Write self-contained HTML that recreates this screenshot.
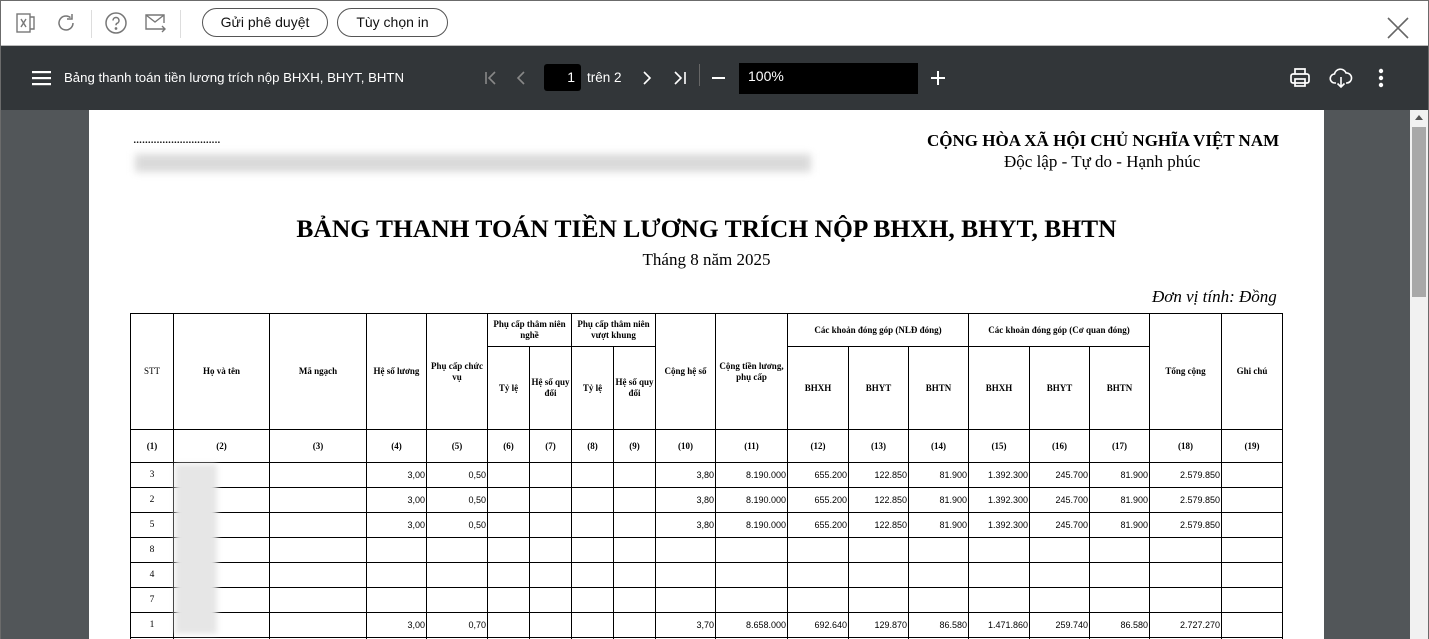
<!DOCTYPE html>
<html><head><meta charset="utf-8"><style>
*{box-sizing:border-box;margin:0;padding:0}
html,body{width:1429px;height:639px;overflow:hidden}
body{font-family:"Liberation Sans",sans-serif;background:#fff;position:relative}
.frame{position:absolute;inset:0;border:1px solid #6b6b6b;border-bottom:none;pointer-events:none;z-index:10}
.top{position:absolute;left:0;top:0;width:1429px;height:46px;background:#fff;border-bottom:1px solid #bbb}
.btn{position:absolute;top:8px;height:29px;border:1px solid #555;border-radius:15px;font-size:14px;line-height:27px;text-align:center;color:#111}
.sep{position:absolute;top:10px;width:1px;height:28px;background:#ddd}
.bar{position:absolute;left:1px;top:46px;width:1427px;height:64px;background:#323639;color:#fff}
.gray{position:absolute;left:1px;top:110px;width:1409px;height:529px;background:#525659}
.sb{position:absolute;left:1410px;top:110px;width:18px;height:529px;background:#f1f1f1}
.page{position:absolute;left:89px;top:110px;width:1235px;height:529px;background:#fff;font-family:"Liberation Serif",serif;color:#000;overflow:hidden}
table{position:absolute;left:41px;top:203px;border-collapse:collapse;table-layout:fixed;font-family:"Liberation Serif",serif}
td{border:1px solid #000;font-size:9px;font-weight:bold;text-align:center;padding:0 1px;line-height:11px}
tr.d td{font-weight:normal;height:25px;font-size:9.5px}
tr.d td.n{text-align:right;font-family:"Liberation Sans",sans-serif;font-size:9px}
.blur{position:absolute;background:#d8d8d8;filter:blur(3px)}
</style></head><body>
<div class="top">
 <svg style="position:absolute;left:15px;top:12px" width="22" height="22" viewBox="0 0 22 22" fill="none" stroke="#777" stroke-width="1.4"><rect x="2" y="2" width="13" height="18"/><path d="M15 5h4v12h-4"/><path d="M6 7l5 8M11 7l-5 8"/></svg>
 <svg style="position:absolute;left:55px;top:12px" width="22" height="22" viewBox="0 0 22 22" fill="none" stroke="#777" stroke-width="1.5"><path d="M18 11a7 7 0 1 1-2.5-5.4"/><path d="M17 2v5h-5"/></svg>
 <div class="sep" style="left:91px"></div>
 <svg style="position:absolute;left:104px;top:11px" width="24" height="24" viewBox="0 0 24 24" fill="none" stroke="#777" stroke-width="1.5"><circle cx="12" cy="12" r="10"/><path d="M9 9.5a3 3 0 1 1 4 2.8c-.8.4-1 1-1 2"/><circle cx="12" cy="17.5" r=".6" fill="#777"/></svg>
 <svg style="position:absolute;left:144px;top:12px" width="24" height="22" viewBox="0 0 24 22" fill="none" stroke="#777" stroke-width="1.4"><path d="M14 17H2V3h18v8"/><path d="M2 3l9 7 9-7"/><path d="M14 17h7M18 14l3 3-3 3"/></svg>
 <div class="sep" style="left:180px"></div>
 <div class="btn" style="left:202px;width:126px">Gửi phê duyệt</div>
 <div class="btn" style="left:337px;width:111px">Tùy chọn in</div>
 <svg style="position:absolute;left:1387px;top:17px" width="22" height="22" viewBox="0 0 22 22" stroke="#666" stroke-width="1.6"><path d="M1 1l20 20M21 1L1 21"/></svg>
</div>
<div class="bar">
 <svg style="position:absolute;left:31px;top:25px" width="20" height="15"><rect y="0" width="19" height="2.2" fill="#fff"/><rect y="6" width="19" height="2.2" fill="#fff"/><rect y="12" width="19" height="2.2" fill="#fff"/></svg>
 <div style="position:absolute;left:63px;top:24px;font-size:13.2px">Bảng thanh toán tiền lương trích nộp BHXH, BHYT, BHTN</div>
 <svg style="position:absolute;left:483px;top:25px" width="14" height="14" fill="none" stroke="#888" stroke-width="1.6"><path d="M2 1v12M11 1L5 7l6 6"/></svg>
 <svg style="position:absolute;left:514px;top:25px" width="14" height="14" fill="none" stroke="#888" stroke-width="1.6"><path d="M9 1L3 7l6 6"/></svg>
 <div style="position:absolute;left:543px;top:18px;width:37px;height:27px;background:#000;border-radius:3px;text-align:right;padding-right:6px;font-size:14px;line-height:27px">1</div>
 <div style="position:absolute;left:586px;top:24px;font-size:13.5px">trên 2</div>
 <svg style="position:absolute;left:639px;top:25px" width="14" height="14" fill="none" stroke="#fff" stroke-width="1.6"><path d="M4 1l6 6-6 6"/></svg>
 <svg style="position:absolute;left:672px;top:25px" width="14" height="14" fill="none" stroke="#fff" stroke-width="1.6"><path d="M2 1l6 6-6 6M12 1v12"/></svg>
 <div style="position:absolute;left:698px;top:18px;width:1px;height:22px;background:#666"></div>
 <div style="position:absolute;left:711px;top:31px;width:13px;height:2px;background:#fff"></div>
 <div style="position:absolute;left:738px;top:17px;width:179px;height:31px;background:#000;font-size:14px;line-height:27px;padding-left:9px">100%</div>
 <div style="position:absolute;left:930px;top:31px;width:14px;height:2px;background:#fff"></div>
 <div style="position:absolute;left:936px;top:25px;width:2px;height:14px;background:#fff"></div>
 <svg style="position:absolute;left:1288px;top:21px" width="22" height="22" fill="none" stroke="#fff" stroke-width="1.7"><path d="M6 7V2h10v5"/><rect x="2" y="7" width="18" height="9" rx="2"/><rect x="6" y="12" width="10" height="7"/></svg>
 <svg style="position:absolute;left:1328px;top:21px" width="24" height="22" fill="none" stroke="#fff" stroke-width="1.6"><path d="M7 16H6a4.5 4.5 0 0 1-.5-9A6 6 0 0 1 17 6a4.5 4.5 0 0 1 1 10h-1"/><path d="M12 10v10M8.5 16.5L12 20l3.5-3.5"/></svg>
 <svg style="position:absolute;left:1376px;top:22px" width="8" height="20" fill="#fff"><circle cx="4" cy="3" r="2.2"/><circle cx="4" cy="10" r="2.2"/><circle cx="4" cy="17" r="2.2"/></svg>
</div>
<div class="gray"></div>
<div class="sb"><div style="position:absolute;left:5px;top:5px;border:4px solid transparent;border-bottom:5px solid #555;border-top:none"></div><div style="position:absolute;left:2px;top:17px;width:14px;height:170px;background:#a8a8a8"></div></div>
<div class="page">
 <div style="position:absolute;left:44px;top:22px;font-size:14px;letter-spacing:-0.6px">..............................</div>
 <div class="blur" style="left:46px;top:44px;width:676px;height:18px;background:#dadada;filter:blur(4px)"></div>
 <div style="position:absolute;left:838px;top:21px;font-size:17px;font-weight:bold;white-space:nowrap">CỘNG HÒA XÃ HỘI CHỦ NGHĨA VIỆT NAM</div>
 <div style="position:absolute;left:915px;top:42px;font-size:17px;white-space:nowrap">Độc lập - Tự do - Hạnh phúc</div>
 <div style="position:absolute;left:0;width:1235px;top:104px;text-align:center;font-size:25.5px;font-weight:bold">BẢNG THANH TOÁN TIỀN LƯƠNG TRÍCH NỘP BHXH, BHYT, BHTN</div>
 <div style="position:absolute;left:0;width:1235px;top:140px;text-align:center;font-size:17px">Tháng 8 năm 2025</div>
 <div style="position:absolute;left:1063px;top:177px;font-size:17px;font-style:italic">Đơn vị tính: Đồng</div>
 <table>
  <colgroup><col style="width:43px"><col style="width:96px"><col style="width:97px"><col style="width:60px"><col style="width:61px"><col style="width:42px"><col style="width:42px"><col style="width:42px"><col style="width:42px"><col style="width:60px"><col style="width:72px"><col style="width:61px"><col style="width:60px"><col style="width:60px"><col style="width:61px"><col style="width:60px"><col style="width:60px"><col style="width:72px"><col style="width:61px"></colgroup>
  <tr style="height:33px"><td rowspan="2" style="font-weight:normal">STT</td><td rowspan="2">Họ và tên</td><td rowspan="2">Mã ngạch</td><td rowspan="2">Hệ số lương</td><td rowspan="2">Phụ cấp chức vụ</td><td colspan="2">Phụ cấp thâm niên nghề</td><td colspan="2">Phụ cấp thâm niên vượt khung</td><td rowspan="2">Cộng hệ số</td><td rowspan="2">Cộng tiền lương, phụ cấp</td><td colspan="3">Các khoản đóng góp (NLĐ đóng)</td><td colspan="3">Các khoản đóng góp (Cơ quan đóng)</td><td rowspan="2">Tổng cộng</td><td rowspan="2">Ghi chú</td></tr>
  <tr style="height:83px"><td>Tỷ lệ</td><td>Hệ số quy đổi</td><td>Tỷ lệ</td><td>Hệ số quy đổi</td><td>BHXH</td><td>BHYT</td><td>BHTN</td><td>BHXH</td><td>BHYT</td><td>BHTN</td></tr>
  <tr style="height:33px"><td>(1)</td><td>(2)</td><td>(3)</td><td>(4)</td><td>(5)</td><td>(6)</td><td>(7)</td><td>(8)</td><td>(9)</td><td>(10)</td><td>(11)</td><td>(12)</td><td>(13)</td><td>(14)</td><td>(15)</td><td>(16)</td><td>(17)</td><td>(18)</td><td>(19)</td></tr>
  <tr class="d"><td>3</td><td></td><td></td><td class="n">3,00</td><td class="n">0,50</td><td></td><td></td><td></td><td></td><td class="n">3,80</td><td class="n">8.190.000</td><td class="n">655.200</td><td class="n">122.850</td><td class="n">81.900</td><td class="n">1.392.300</td><td class="n">245.700</td><td class="n">81.900</td><td class="n">2.579.850</td><td></td></tr>
  <tr class="d"><td>2</td><td></td><td></td><td class="n">3,00</td><td class="n">0,50</td><td></td><td></td><td></td><td></td><td class="n">3,80</td><td class="n">8.190.000</td><td class="n">655.200</td><td class="n">122.850</td><td class="n">81.900</td><td class="n">1.392.300</td><td class="n">245.700</td><td class="n">81.900</td><td class="n">2.579.850</td><td></td></tr>
  <tr class="d"><td>5</td><td></td><td></td><td class="n">3,00</td><td class="n">0,50</td><td></td><td></td><td></td><td></td><td class="n">3,80</td><td class="n">8.190.000</td><td class="n">655.200</td><td class="n">122.850</td><td class="n">81.900</td><td class="n">1.392.300</td><td class="n">245.700</td><td class="n">81.900</td><td class="n">2.579.850</td><td></td></tr>
  <tr class="d"><td>8</td><td></td><td></td><td></td><td></td><td></td><td></td><td></td><td></td><td></td><td></td><td></td><td></td><td></td><td></td><td></td><td></td><td></td><td></td></tr>
  <tr class="d"><td>4</td><td></td><td></td><td></td><td></td><td></td><td></td><td></td><td></td><td></td><td></td><td></td><td></td><td></td><td></td><td></td><td></td><td></td><td></td></tr>
  <tr class="d"><td>7</td><td></td><td></td><td></td><td></td><td></td><td></td><td></td><td></td><td></td><td></td><td></td><td></td><td></td><td></td><td></td><td></td><td></td><td></td></tr>
  <tr class="d"><td>1</td><td></td><td></td><td class="n">3,00</td><td class="n">0,70</td><td></td><td></td><td></td><td></td><td class="n">3,70</td><td class="n">8.658.000</td><td class="n">692.640</td><td class="n">129.870</td><td class="n">86.580</td><td class="n">1.471.860</td><td class="n">259.740</td><td class="n">86.580</td><td class="n">2.727.270</td><td></td></tr>
  <tr class="d"><td></td><td></td><td></td><td></td><td></td><td></td><td></td><td></td><td></td><td></td><td></td><td></td><td></td><td></td><td></td><td></td><td></td><td></td><td></td></tr>
 </table>
 <div class="blur" style="left:86px;top:354px;width:42px;height:170px;background:#e6e6e6"></div>
</div>
<div class="frame"></div>
</body></html>
